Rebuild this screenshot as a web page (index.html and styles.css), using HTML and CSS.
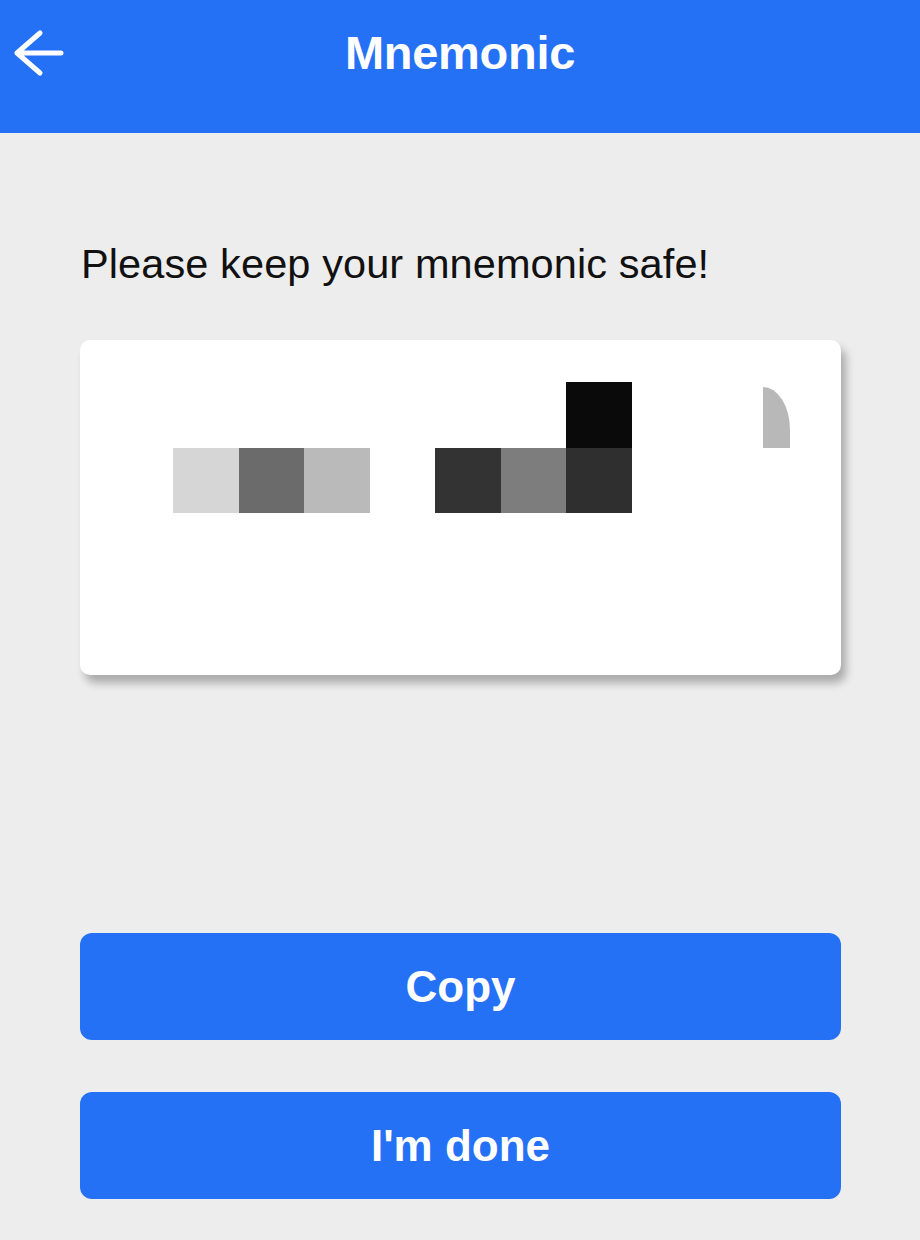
FILE: index.html
```html
<!DOCTYPE html>
<html lang="en">
<head>
  <meta charset="UTF-8">
  <meta name="viewport" content="width=device-width, initial-scale=1.0">
  <title>Mnemonic</title>
  <link rel="stylesheet" href="styles.css">
</head>
<body>
  <div class="header">
    <div class="header-bar">
      <a class="back-btn" href="#" aria-label="Back">
        <svg width="52" height="48" viewBox="0 0 52 48">
          <path d="M28 4 L5 24 L28 44 M5 24 H49" fill="none" stroke="#fff" stroke-width="5" stroke-linecap="round" stroke-linejoin="round"/>
        </svg>
      </a>
      <h1>Mnemonic</h1>
      <span></span>
    </div>
  </div>

  <div class="main-content">
    <p class="notice">Please keep your mnemonic safe!</p>

    <div class="card" id="mnemonic">
      <div class="mosaic">
        <div class="px c-black" style="grid-column: 7; grid-row: 1"></div>
        <div class="px c-edge" style="grid-column: 10; grid-row: 1"></div>
        <div class="px c-light" style="grid-column: 1; grid-row: 2"></div>
        <div class="px c-mid" style="grid-column: 2; grid-row: 2"></div>
        <div class="px c-silver" style="grid-column: 3; grid-row: 2"></div>
        <div class="px c-dark" style="grid-column: 5; grid-row: 2"></div>
        <div class="px c-grey" style="grid-column: 6; grid-row: 2"></div>
        <div class="px c-dark2" style="grid-column: 7; grid-row: 2"></div>
      </div>
    </div>

    <div class="actions">
      <button class="btn" onclick="copyMnemonic()">Copy</button>
      <button class="btn">I'm done</button>
    </div>
  </div>

  <script>
  function copyMnemonic() {
    const text = document.getElementById('mnemonic').textContent.trim();
    if (navigator.clipboard) {
      navigator.clipboard.writeText(text);
    }
  }
  </script>
</body>
</html>
```

FILE: styles.css
```css
body {
  font-family: "Liberation Sans", Arial, sans-serif;
  margin: 0;
  padding: 0;
  background-color: #ededed;
  color: #111;
}
.header {
  background-color: #2571f6;
  height: 133px;
}
.header-bar {
  height: 104px;
  display: grid;
  grid-template-columns: 1fr auto 1fr;
  align-items: center;
}
.back-btn {
  display: block;
  width: 52px;
  height: 48px;
  margin-left: 12px;
  margin-top: 2px;
}
.header h1 {
  margin: 0;
  color: white;
  font-size: 47px;
  font-weight: bold;
  letter-spacing: -0.3px;
}
.main-content {
  padding: 0 79px 0 80px;
}
.notice {
  margin: 107px 0 0 1px;
  font-size: 41.5px;
  line-height: 48px;
  letter-spacing: 0.1px;
}
.card {
  background-color: white;
  border-radius: 10px;
  margin-top: 52px;
  height: 335px;
  box-sizing: border-box;
  padding: 42px 0 0 93px;
  box-shadow: 5px 8px 9px rgba(0, 0, 0, 0.28);
}
.mosaic {
  display: grid;
  grid-template-columns: repeat(10, 65.5px);
  grid-template-rows: 66px 65px;
}
.px {
  width: 100%;
  height: 100%;
}
.c-black { background-color: #0a0a0a; }
.c-light { background-color: #d6d6d6; }
.c-mid { background-color: #6b6b6b; }
.c-silver { background-color: #bababa; }
.c-dark { background-color: #333; }
.c-grey { background-color: #7d7d7d; }
.c-dark2 { background-color: #2f2f2f; }
.c-edge {
  width: 27px;
  height: 61px;
  margin-top: 5px;
  background-color: #b8b8b8;
  border-top-right-radius: 100% 70%;
}
.actions {
  display: flex;
  flex-direction: column;
  gap: 52px;
  margin-top: 258px;
}
.btn {
  display: block;
  width: 100%;
  height: 107px;
  border: none;
  border-radius: 12px;
  background-color: #2571f6;
  color: white;
  font-family: "Liberation Sans", Arial, sans-serif;
  font-size: 44px;
  font-weight: bold;
  cursor: pointer;
}
```
